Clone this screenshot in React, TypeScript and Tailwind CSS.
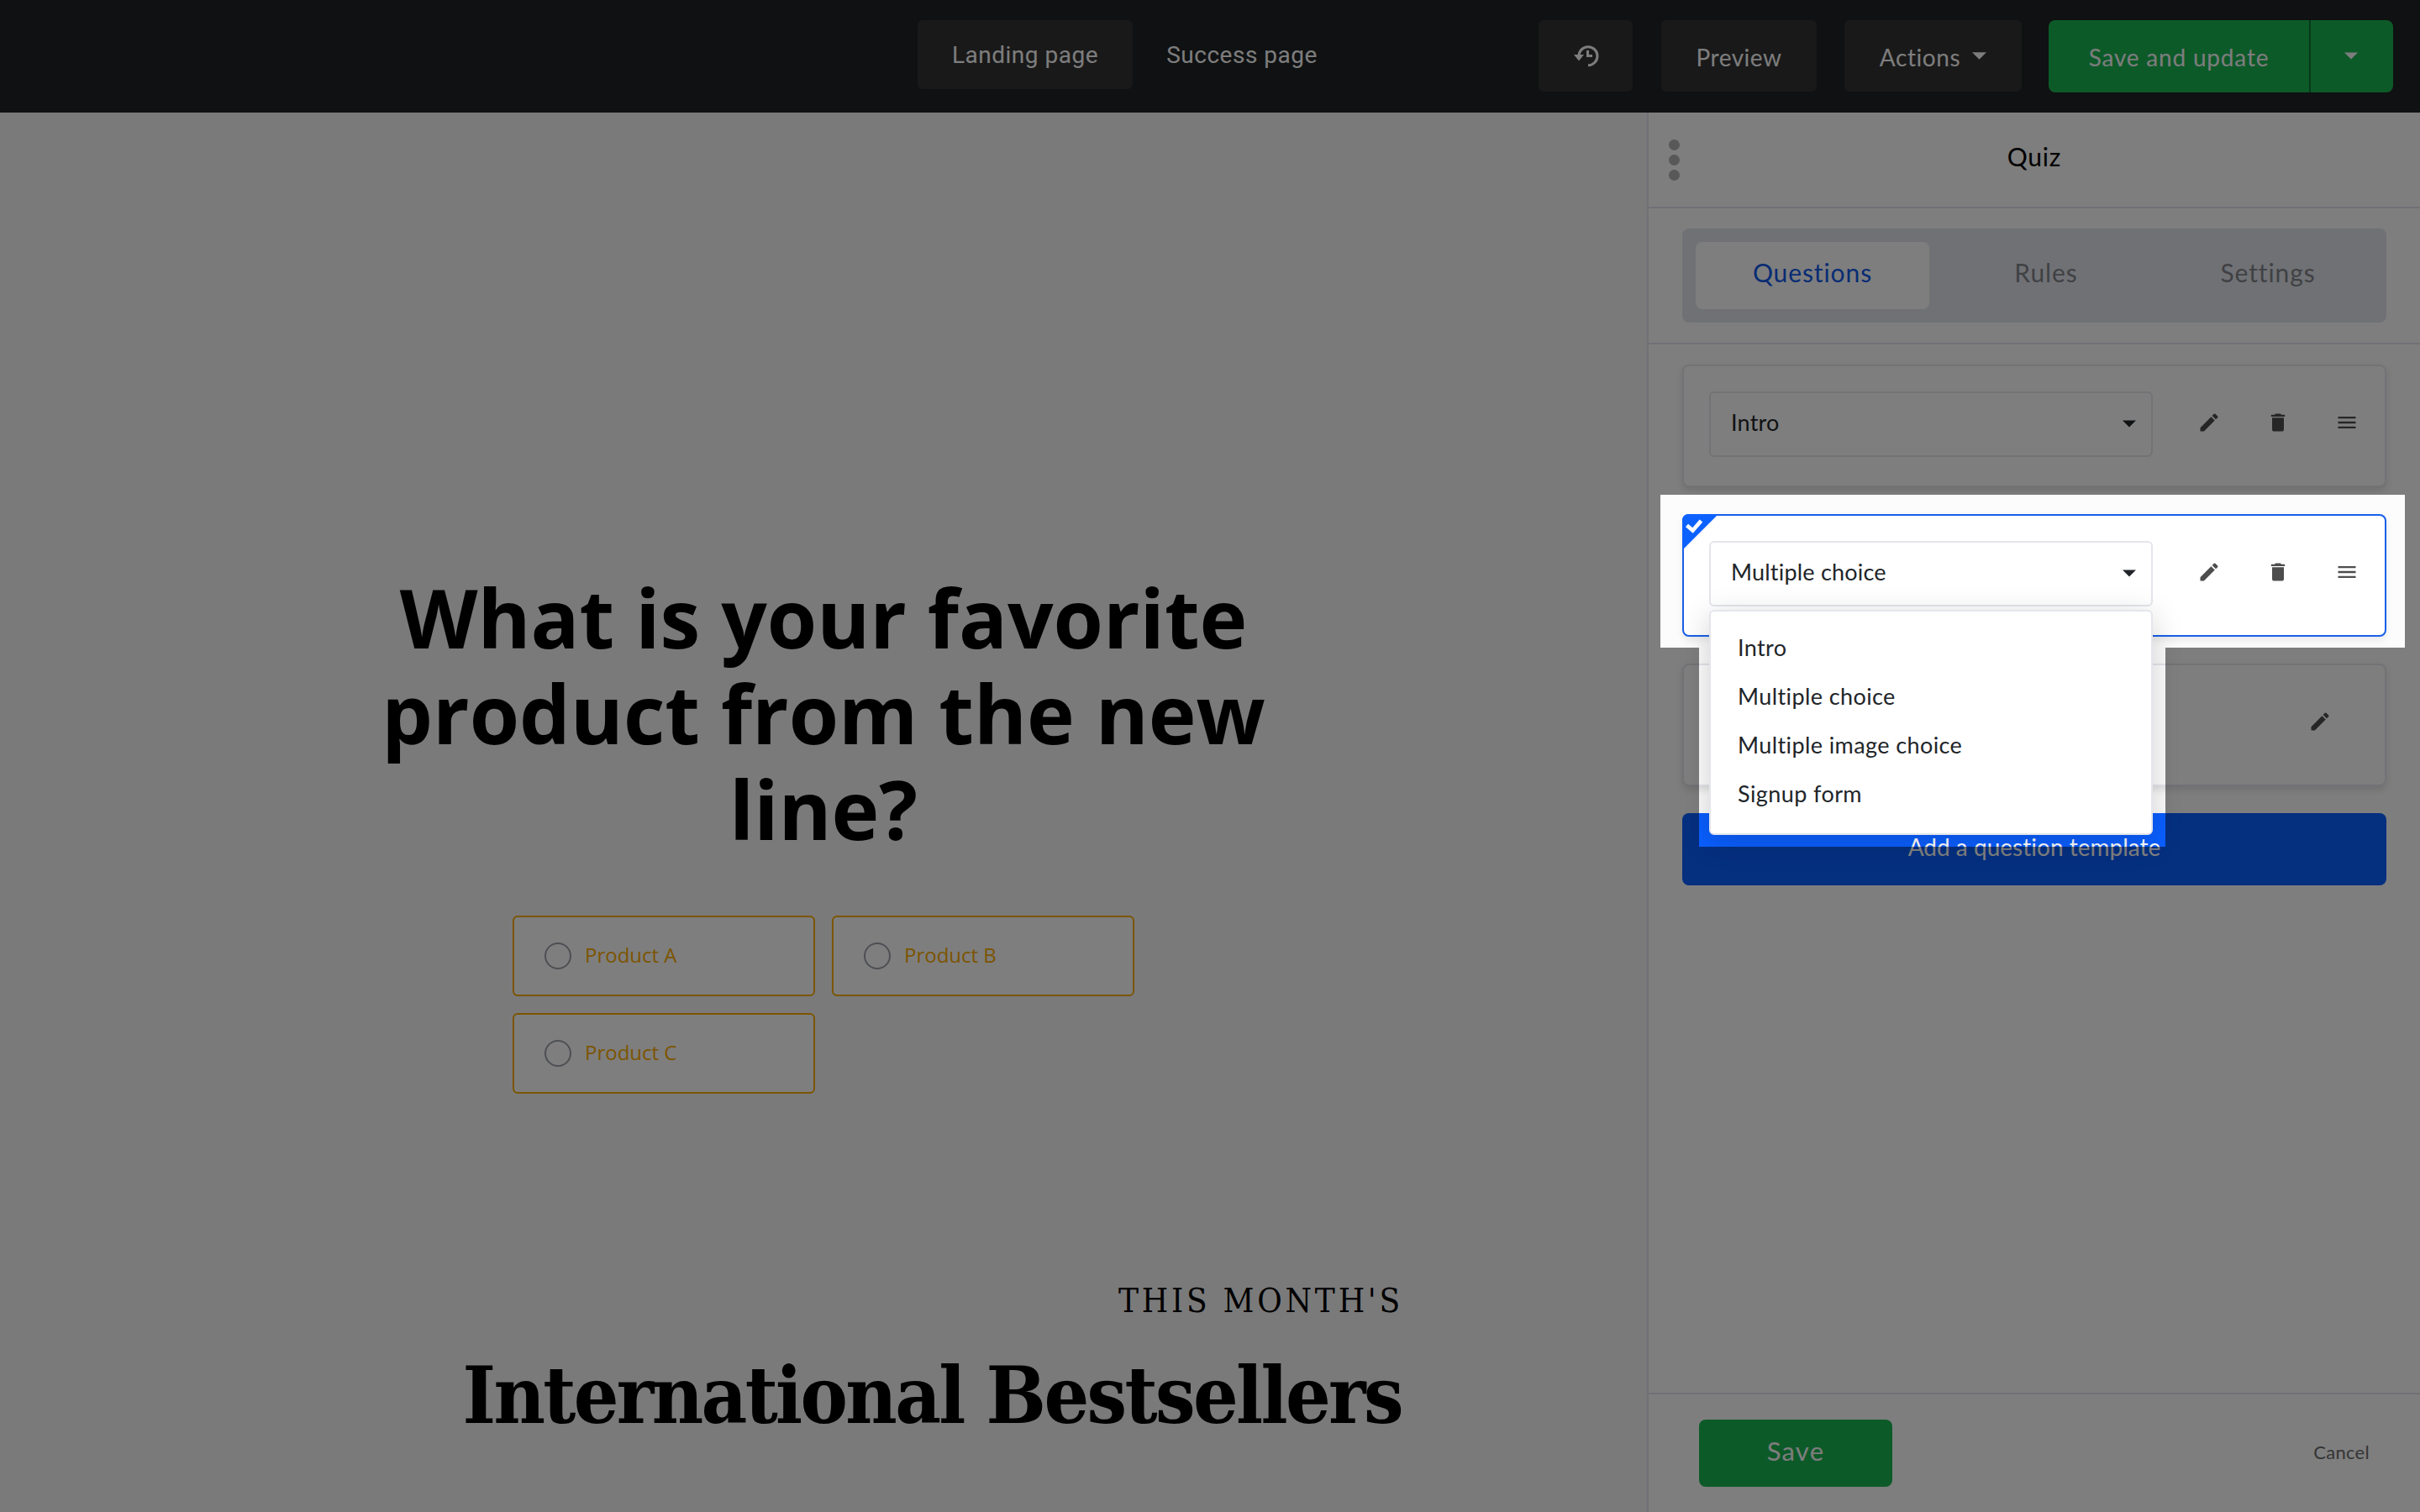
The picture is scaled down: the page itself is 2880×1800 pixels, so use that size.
import { MdDelete, MdEdit, MdMenu } from "react-icons/md";

const templates = ["Intro", "Multiple choice", "Multiple image choice", "Signup form"];

function Caret({ className = "" }: { className?: string }) {
  return (
    <svg viewBox="0 0 18 9" className={`h-[9px] fill-current ${className}`}>
      <path d="M0 0h18L9 9z" />
    </svg>
  );
}

function HistoryIcon() {
  return (
    <svg viewBox="0 0 30 26" className="ml-0.5 h-[26px] w-[30px]">
      <path d="M6 12.7A11 11 0 1 1 17 23.7" fill="none" stroke="currentColor" strokeWidth="3" />
      <path d="M0 11h12l-6 7.5z" fill="currentColor" />
      <path d="M16.5 6v6.5h5.5" fill="none" stroke="currentColor" strokeWidth="3" />
    </svg>
  );
}

function TopBar() {
  return (
    <header className="flex h-[134px] items-start bg-[#1f2224] pt-6 pl-[1092px] text-[28px] tracking-[0.6px] text-[#fafafa]">
      <div className="flex h-[82px] w-[256px] items-center justify-center rounded-md bg-[#333333] pt-0.5 font-['Roboto'] tracking-[0.5px]">
        Landing page
      </div>
      <div className="flex h-[82px] w-[260px] items-center justify-center pt-0.5 font-['Roboto'] tracking-[0.5px]">
        Success page
      </div>
      <button className="ml-[223px] flex h-[85px] w-[112px] items-center justify-center rounded-md bg-[#333333]">
        <HistoryIcon />
      </button>
      <button className="ml-[34px] h-[85px] w-[185px] rounded-md bg-[#333333] pt-0.5 tracking-[0.5px]">Preview</button>
      <button className="ml-[33px] flex h-[85px] w-[211px] items-center justify-center rounded-md bg-[#333333] pt-0.5">
        Actions
        <Caret className="mb-0.5 ml-[14px] w-[17px]" />
      </button>
      <div className="ml-8 flex h-[86px] w-[410px] rounded-lg bg-[#1ab553]">
        <button className="w-[312px] border-r-2 border-[#0f7033] pt-0.5 tracking-[0.8px]">Save and update</button>
        <button className="flex flex-1 items-center justify-center pr-0.5 pb-0.5">
          <Caret className="w-4" />
        </button>
      </div>
    </header>
  );
}

function Option({ label }: { label: string }) {
  return (
    <label className="flex h-24 items-center gap-4 rounded-md border-2 border-[#f8aa00] bg-[#fcfcfc] pl-9 text-[24px] text-[#f8aa00]">
      <span className="size-8 rounded-full border-2 border-[#9a9ea6]" />
      <span className="pb-0.5">{label}</span>
    </label>
  );
}

function Canvas() {
  return (
    <main className="w-[1960px] bg-[#f4f4f4] pt-[544px] text-black">
      <h1 className="mx-auto w-[1100px] text-center font-['Open_Sans'] text-[96px] leading-[114px] font-bold">
        What is your favorite product from the new line?
      </h1>
      <div className="mx-auto mt-[70px] grid w-[740px] grid-cols-2 gap-5 font-['Open_Sans'] font-medium">
        <Option label="Product A" />
        <Option label="Product B" />
        <Option label="Product C" />
      </div>
      <div className="mt-[216px] flex flex-col items-end pr-[292px] font-['DejaVu_Serif_Condensed','DejaVu_Serif',serif] font-stretch-condensed">
        <p className="-mr-0.5 text-[40px] leading-[60px] tracking-[3.8px]">THIS MONTH'S</p>
        <h2 className="mt-[26px] text-[94px] leading-[114px] font-bold tracking-[-2.65px] whitespace-nowrap">
          International Bestsellers
        </h2>
      </div>
    </main>
  );
}

function Select({ value }: { value: string }) {
  return (
    <div className="flex h-[78px] w-[528px] items-center justify-between rounded-md border-2 border-[#e4e6ec] pr-[18px] pb-1 pl-6 text-[27px] tracking-[0.2px] text-[#212529]">
      {value}
      <Caret className="mt-0.5 w-4" />
    </div>
  );
}

function QuestionCard({ value, selected = false }: { value: string; selected?: boolean }) {
  return (
    <div
      className={
        selected
          ? "relative flex h-[146px] rounded-lg border-2 border-[#1860e8] bg-white pt-[30px] pl-[30px] shadow-[0_4px_8px_rgba(0,0,0,0.08)]"
          : "relative flex h-[146px] rounded-lg border-2 border-[#e4e6ec] bg-[#fdfdfd] pt-[30px] pl-[30px] shadow-[0_4px_8px_rgba(0,0,0,0.12)]"
      }
    >
      {selected && (
        <svg viewBox="0 0 43 43" className="absolute -top-0.5 -left-0.5 size-[43px]">
          <path d="M8 0H43L0 43V8Q0 0 8 0z" fill="#0d61ff" />
          <path d="M5.5 13.5l7 6L22.5 8" fill="none" stroke="#fff" strokeWidth="4.8" />
        </svg>
      )}
      <Select value={value} />
      <div className="ml-[53px] flex h-[74px] items-center gap-[54px] text-[#4d4d4d]">
        <MdEdit className="size-7" />
        <MdDelete className="size-7" />
        <MdMenu className="size-7" />
      </div>
      {selected && (
        <ul className="absolute top-[112px] left-[30px] z-10 h-[268px] w-[528px] rounded-md border-2 border-[#e4e6ec] bg-white pt-[14px] pl-8 text-[27px] leading-[58px] tracking-[0.4px] text-[#212529] shadow-[0_8px_36px_rgba(0,0,0,0.18)]">
          {templates.map((name) => (
            <li key={name}>{name}</li>
          ))}
        </ul>
      )}
    </div>
  );
}

function Sidebar() {
  return (
    <aside className="flex w-[920px] flex-col border-l-2 border-[#e0e2ea] bg-[#fcfcfc]">
      <div className="flex h-[114px] items-center border-b-2 border-[#e0e2ea]">
        <div className="flex flex-col gap-[5px] pl-6">
          <span className="size-[13px] rounded-full bg-[#b0b0b0]" />
          <span className="size-[13px] rounded-full bg-[#b0b0b0]" />
          <span className="size-[13px] rounded-full bg-[#b0b0b0]" />
        </div>
        <h3 className="flex-1 pr-[37px] pb-[7px] text-center text-[30px] tracking-[0.8px] text-black">Quiz</h3>
      </div>
      <div className="h-[162px] border-b-2 border-[#e0e2ea] px-10 pt-6">
        <nav className="flex h-28 rounded-lg bg-[#e0e3eb] p-4 text-[30px] leading-[73px] tracking-[0.9px] text-[#808388]">
          <span className="h-20 w-[278px] rounded-lg bg-[#fdfdfd] text-center text-[#1058e8]">Questions</span>
          <span className="w-[278px] text-center">Rules</span>
          <span className="flex-1 text-center">Settings</span>
        </nav>
      </div>
      <div className="flex flex-1 flex-col px-10 pt-6">
        <QuestionCard value="Intro" />
        <div className="mt-8">
          <QuestionCard value="Multiple choice" selected />
        </div>
        <div className="mt-8 flex h-[146px] justify-end rounded-lg border-2 border-[#e4e6ec] bg-[#fdfdfd] pt-[53px] pr-[63px] text-[#4d4d4d] shadow-[0_4px_8px_rgba(0,0,0,0.12)]">
          <MdEdit className="size-7" />
        </div>
        <button className="mt-8 h-[86px] rounded-lg bg-[#0a5fff] pb-1.5 text-[28px] tracking-[0.01px] text-white">
          Add a question template
        </button>
      </div>
      <footer className="flex h-[142px] items-center justify-between border-t-2 border-[#e0e2ea] px-[60px]">
        <button className="h-20 w-[230px] rounded-lg bg-[#1ab553] pb-1.5 text-[31px] tracking-[1.2px] text-[#fafafa]">
          Save
        </button>
        <span className="pb-1 text-[22px] tracking-[0.3px] text-[#6b6b6b]">Cancel</span>
      </footer>
    </aside>
  );
}

export default function App() {
  return (
    <div className="relative flex h-[1800px] w-[2880px] flex-col overflow-hidden font-['Lato',sans-serif]">
      <TopBar />
      <div className="flex flex-1">
        <Canvas />
        <Sidebar />
      </div>
      {/* dimmed backdrop with a cut-out around the open dropdown */}
      <div className="absolute inset-0 z-20 bg-black/50 [clip-path:polygon(evenodd,0_0,2880px_0,2880px_1800px,0_1800px,0_0,1976px_589px,2862px_589px,2862px_771px,2577px_771px,2577px_1008px,2022px_1008px,2022px_771px,1976px_771px,1976px_589px)]" />
    </div>
  );
}
